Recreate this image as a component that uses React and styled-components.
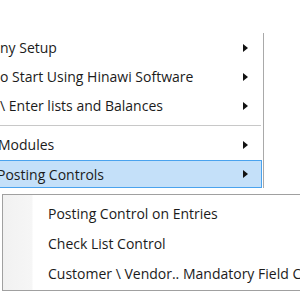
import React from "react";
import styled, { createGlobalStyle } from "styled-components";

const GlobalStyle = createGlobalStyle`
    html, body {
        margin: 0;
        padding: 0;
        background: #fff;
    }
    body {
        font-family: "Open Sans", "Noto Sans", sans-serif;
    }
`;

const Screen = styled.div`
    width: 300px;
    height: 300px;
    overflow: hidden;
    background: #fff;
    padding-top: 33px;
    box-sizing: border-box;
`;

const MainMenu = styled.ul`
    list-style: none;
    margin: 0 0 0 -4px;
    padding: 0;
    width: 268px;
    border-right: 1px solid #a9a9a9;
    box-sizing: border-box;
`;

const Item = styled.li`
    position: relative;
    height: 29px;
    display: flex;
    align-items: center;
    padding: 0 0 0 ${(p) => p.$indent ?? 4}px;
    font-size: 14px;
    color: #1b1b1b;
    white-space: nowrap;
    box-sizing: border-box;

    ${(p) =>
        p.$active &&
        `
        margin-top: 1px;
        height: 28px;
        background: #c4e0f9;
        border: 1px solid #4aa3ee;
        margin-right: 1px;
    `}
`;

const Label = styled.span`
    flex: 1;
`;

const Arrow = styled.span`
    width: 0;
    height: 0;
    border-top: 4px solid transparent;
    border-bottom: 4px solid transparent;
    border-left: 5px solid #111;
    margin-right: ${(p) => (p.$active ? 13 : 15)}px;
`;

const Separator = styled.li`
    height: 10px;
    display: flex;
    align-items: center;

    &::after {
        content: "";
        display: block;
        width: 100%;
        height: 1px;
        background: #c8c8c8;
        margin-right: 2px;
    }
`;

const SubMenu = styled.ul`
    list-style: none;
    margin: 6px 0 0 2px;
    padding: 3px 0 0;
    width: 320px;
    height: 97px;
    box-sizing: border-box;
    border: 1px solid #a0a0a0;
    background: linear-gradient(to right, #f1f1f1 0, #f6f6f6 29px, #fff 30px);
`;

const SubItem = styled.li`
    height: 30px;
    display: flex;
    align-items: center;
    padding-left: 45px;
    font-size: 14px;
    color: #1b1b1b;
    white-space: nowrap;
`;

const mainItems = [
    { label: "ny Setup" },
    { label: "o Start Using Hinawi Software" },
    { label: "\\ Enter lists and Balances", sep: true },
    { label: "Modules", indent: 2 },
    { label: "Posting Controls", active: true, indent: 0 },
];

const subItems = [
    "Posting Control on Entries",
    "Check List Control",
    "Customer \\ Vendor.. Mandatory Field Control",
];

const App = () => {
    return (
        <>
            <GlobalStyle />
            <Screen>
                <MainMenu>
                    {mainItems.map((item) => (
                        <React.Fragment key={item.label}>
                            <Item $active={item.active} $indent={item.indent}>
                                <Label>{item.label}</Label>
                                <Arrow $active={item.active} />
                            </Item>
                            {item.sep && <Separator />}
                        </React.Fragment>
                    ))}
                </MainMenu>
                <SubMenu>
                    {subItems.map((label) => (
                        <SubItem key={label}>{label}</SubItem>
                    ))}
                </SubMenu>
            </Screen>
        </>
    );
};

export default App;
